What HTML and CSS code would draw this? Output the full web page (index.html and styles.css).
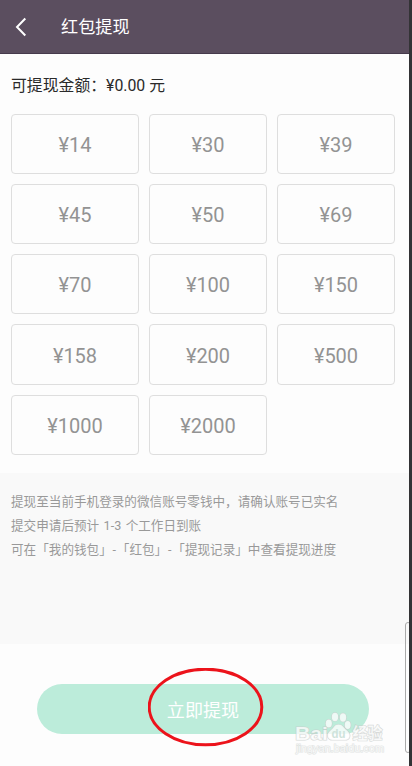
FILE: index.html
```html
<!DOCTYPE html>
<html lang="zh-CN">
	<head>
		<meta charset="UTF-8" />
		<meta name="viewport" content="width=device-width, initial-scale=1.0" />
		<title>红包提现</title>
		<link rel="stylesheet" href="styles.css">
	</head>
	<body>
		<div class="page">
			<header class="header">
				<button class="back-button" aria-label="返回">
					<svg width="12" height="20" viewBox="0 0 12 20">
						<path d="M10.3 1.5L2 10L10.3 18.5" fill="none" stroke="currentColor" stroke-width="2" />
					</svg>
				</button>
				<h1 class="title">红包提现</h1>
			</header>

			<main class="withdraw">
				<p class="balance">可提现金额：¥0.00 元</p>
				<div class="amounts">
					<button class="amount">¥14</button>
					<button class="amount">¥30</button>
					<button class="amount">¥39</button>
					<button class="amount">¥45</button>
					<button class="amount">¥50</button>
					<button class="amount">¥69</button>
					<button class="amount">¥70</button>
					<button class="amount">¥100</button>
					<button class="amount">¥150</button>
					<button class="amount">¥158</button>
					<button class="amount">¥200</button>
					<button class="amount">¥500</button>
					<button class="amount">¥1000</button>
					<button class="amount">¥2000</button>
				</div>
			</main>

			<section class="notice">
				<p>提现至当前手机登录的微信账号零钱中，请确认账号已实名</p>
				<p class="notice-steps">提交申请后预计 1-3 个工作日到账</p>
				<p>可在「我的钱包」<span class="dash">-</span>「红包」<span class="dash">-</span>「提现记录」中查看提现进度</p>
			</section>

			<footer class="footer">
				<button class="submit-button">立即提现</button>
			</footer>

			<div class="side-handle"></div>

			<svg class="marker" width="116" height="79" viewBox="0 0 116 79">
				<ellipse cx="57.5" cy="39" rx="56.3" ry="37.8" fill="none" stroke="#ec131b" stroke-width="3" />
			</svg>

			<svg class="watermark" width="96" height="48" viewBox="0 0 96 48">
				<g class="watermark-shape">
					<text class="watermark-logo" x="1" y="29.8" textLength="33" lengthAdjust="spacingAndGlyphs">Bai</text>
					<ellipse cx="34.8" cy="13.5" rx="3.1" ry="4" />
					<ellipse cx="41" cy="7" rx="3.2" ry="4.2" />
					<ellipse cx="49" cy="7.5" rx="3.2" ry="4.2" />
					<ellipse cx="53.7" cy="15" rx="3" ry="4" />
					<path d="M44.5 14.5C40 14.5 40 18 36 21C31.5 25 34 30 38.5 30H51C56 30 57.5 25 53.5 21C49 17.5 49 14.5 44.5 14.5Z" />
					<text class="watermark-name" x="58.5" y="28.5" textLength="30" lengthAdjust="spacingAndGlyphs">经验</text>
					<text class="watermark-url" x="2" y="42" textLength="88" lengthAdjust="spacingAndGlyphs">jingyan.baidu.com</text>
				</g>
				<text class="watermark-du" x="37.5" y="27.5" textLength="14" lengthAdjust="spacingAndGlyphs">du</text>
			</svg>
		</div>
	</body>
</html>
```

FILE: styles.css
```css
* {
	margin: 0;
	padding: 0;
	box-sizing: border-box;
}
body {
	background-color: #333335;
	font-family: Roboto, "Noto Sans CJK SC", sans-serif;
}
button {
	border: none;
	background: none;
	font-family: inherit;
}
.page {
	position: relative;
	display: flex;
	flex-direction: column;
	width: 409px;
	height: 766px;
	background-color: #fdfdfd;
	overflow: hidden;
}
.header {
	display: flex;
	align-items: center;
	gap: 34px;
	height: 54px;
	padding-left: 15px;
	background-color: #5b4e5f;
	border-bottom: 1px solid #463a4c;
	color: #fff;
}
.back-button {
	display: flex;
	width: 12px;
	color: inherit;
}
.title {
	font-size: 17.15px;
	font-weight: 400;
	line-height: 24px;
}
.withdraw {
	height: 419px;
	padding: 20px 14px 0 11px;
}
.balance {
	height: 39.5px;
	font-size: 15.85px;
	line-height: 24px;
	color: #2a2a2a;
}
.amounts {
	display: grid;
	grid-template-columns: 128px 118px 118px;
	grid-auto-rows: 60.3px;
	gap: 10px;
}
.amount {
	padding-top: 2px;
	border: 1px solid #dedede;
	border-radius: 4px;
	font-size: 20px;
	color: #939393;
}
.notice {
	height: 171px;
	padding: 16.5px 11px 0;
	background-color: #f9f9f9;
	font-size: 12.6px;
	line-height: 24.2px;
	color: #999;
}
.notice-steps {
	word-spacing: 1.3px;
}
.dash {
	padding: 0 0.8px;
}
.footer {
	padding: 40px 40px 0 37px;
}
.submit-button {
	display: block;
	width: 100%;
	height: 50px;
	border-radius: 25px;
	background-color: #bcecda;
	font-size: 18.1px;
	color: #fff;
}
.side-handle {
	position: absolute;
	top: 622px;
	right: -2px;
	width: 6px;
	height: 131px;
	border: 1px solid #aaa;
	border-radius: 4px;
}
.marker {
	position: absolute;
	top: 668px;
	left: 148px;
}
.watermark {
	position: absolute;
	top: 710px;
	left: 294px;
}
.watermark-shape {
	fill: #fff;
	fill-opacity: 0.75;
	stroke: #c6cbc9;
	stroke-opacity: 0.7;
	stroke-width: 1.2;
	paint-order: stroke;
}
.watermark-logo {
	font: 700 19px "Liberation Sans", sans-serif;
}
.watermark-name {
	font: 700 15.5px "Noto Sans CJK SC", sans-serif;
}
.watermark-url {
	font: 400 10px "Liberation Sans", sans-serif;
	stroke-opacity: 0.5;
}
.watermark-du {
	font: 700 12px "Liberation Sans", sans-serif;
	fill: #cfe3db;
}
```
